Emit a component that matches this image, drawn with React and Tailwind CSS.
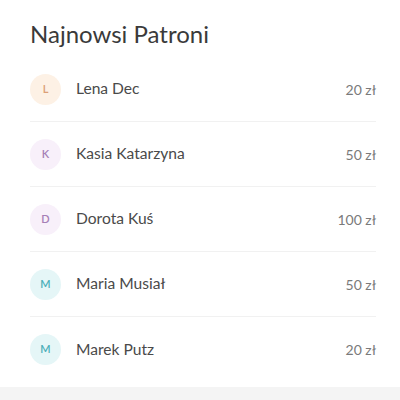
import React from 'react';

const patrons = [
  { name: "Lena Dec", amount: "20 zł", bg: "bg-[#fdf1e5]", fg: "text-[#dca077]" },
  { name: "Kasia Katarzyna", amount: "50 zł", bg: "bg-[#f8f0fa]", fg: "text-[#a67fb6]" },
  { name: "Dorota Kuś", amount: "100 zł", bg: "bg-[#f8f0fa]", fg: "text-[#a67fb6]" },
  { name: "Maria Musiał", amount: "50 zł", bg: "bg-[#e5f6f7]", fg: "text-[#4aaeb7]" },
  { name: "Marek Putz", amount: "20 zł", bg: "bg-[#e5f6f7]", fg: "text-[#4aaeb7]" },
];

const App = () => {
  return (
    <div className="w-[400px] h-[400px] bg-[#f4f4f4] font-['Lato',sans-serif]">
      {/* Card */}
      <div className="bg-white h-[387px] pl-[30px] pr-[24px] pt-[18px]">
        <h2 className="text-[24px] leading-[32px] text-[#3a3a3a] mb-[7px]">Najnowsi Patroni</h2>
        <ul>
          {patrons.map((p, i) => (
            <li
              key={i}
              className={`flex items-center h-[65px] ${i < patrons.length - 1 ? "border-b border-[#f1f1f1]" : ""}`}
            >
              <div className={`w-[31px] h-[31px] rounded-full flex items-center justify-center ${p.bg}`}>
                <span className={`text-[11px] font-semibold ${p.fg}`}>{p.name[0]}</span>
              </div>
              <span className="ml-[15px] text-[15.6px] text-[#4a4a4a] flex-1">{p.name}</span>
              <span className="text-[14px] text-[#7a7a7a]">{p.amount}</span>
            </li>
          ))}
        </ul>
      </div>
    </div>
  );
};

export default App;
